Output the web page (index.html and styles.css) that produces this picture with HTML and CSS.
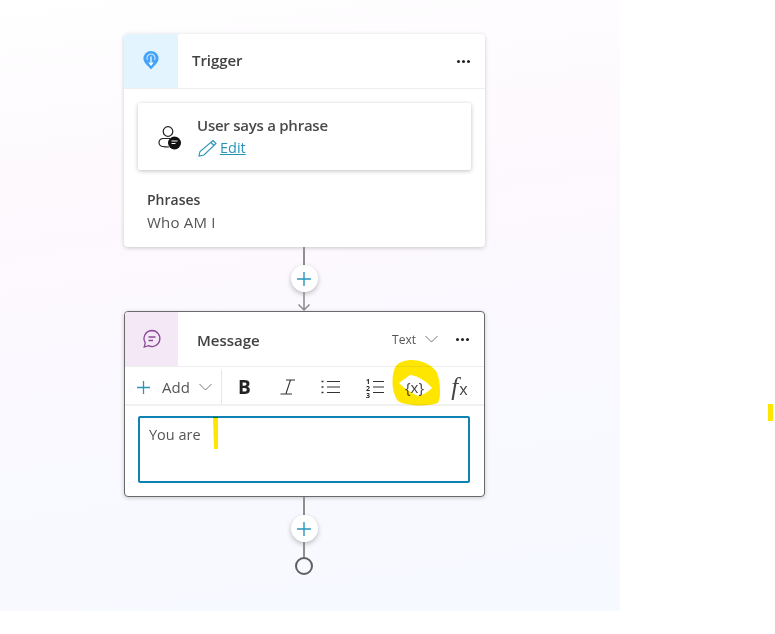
FILE: index.html
```html
<!DOCTYPE html>
<html lang="en">
<head>
  <meta charset="UTF-8">
  <title>Topic editor</title>
  <link rel="stylesheet" href="styles.css">
</head>
<body>
  <div class="canvas">
    <div class="flow">
      <!-- trigger node -->
      <div class="card">
        <div class="card-head">
          <div class="head-icon trigger-bg">
            <svg width="20" height="24" viewBox="0 0 20 24">
              <circle cx="10" cy="9.5" r="7.6" fill="#45a3fa"/>
              <path d="M5 15 L10 20.5 L15 15 Z" fill="#45a3fa"/>
              <path d="M6.5 11 A4 4 0 1 1 13.5 11" fill="none" stroke="#cfe8ff" stroke-width="1.1"/>
              <path d="M10 7.5 V16 M8 13.5 L10 16 L12 13.5" fill="none" stroke="#fff" stroke-width="1.2"/>
            </svg>
          </div>
          <span class="trigger-title">Trigger</span>
          <span class="dots"><i></i><i></i><i></i></span>
        </div>
        <div class="card-body">
          <div class="phrase-box">
            <svg class="person" width="26" height="26" viewBox="0 0 26 26">
              <circle cx="11" cy="6.5" r="4.8" fill="none" stroke="#222" stroke-width="1.2"/>
              <path d="M13 13.5 H6 a3.8 3.8 0 0 0 0 8 C7.5 22 10 22 12 22" fill="none" stroke="#222" stroke-width="1.2"/>
              <circle cx="17.5" cy="18" r="6.5" fill="#111"/>
              <path d="M14.5 16 H20.5 M14.5 18.5 H18.5" stroke="#fff" stroke-width="1.2"/>
            </svg>
            <div>
              <div class="phrase-title">User says a phrase</div>
              <div class="edit-row">
                <svg width="20" height="18" viewBox="0 0 20 18">
                  <path d="M16 1.5 L19 4.5 L7 16 L2 17 L3 12.5 Z M14 3.5 L17 6.5" fill="none" stroke="#2a94b8" stroke-width="1.1"/>
                </svg>
                <a href="#" class="edit-link">Edit</a>
              </div>
            </div>
          </div>
          <div class="phrases">
            <div class="phrases-label">Phrases</div>
            <div class="phrases-text">Who AM I</div>
          </div>
        </div>
      </div>

      <div class="connector">
        <div class="line line-top"></div>
        <div class="plus-btn">
          <svg width="16" height="16" viewBox="0 0 16 16"><path d="M8 1 V15 M1 8 H15" stroke="#2a94bd" stroke-width="1.4"/></svg>
        </div>
        <svg class="arrow" width="14" height="19" viewBox="0 0 14 19">
          <path d="M7 0 V18 M1.5 12.5 L7 18 L12.5 12.5" fill="none" stroke="#8f8f8f" stroke-width="1.6"/>
        </svg>
      </div>

      <!-- message node -->
      <div class="card card-active">
        <div class="card-head">
          <div class="head-icon message-bg">
            <svg width="22" height="22" viewBox="0 0 22 22">
              <path d="M11 2.5 a8 8 0 1 1 -3.6 15.2 L3.2 19 L4.3 14.8 A8 8 0 0 1 11 2.5 Z" fill="none" stroke="#8a4a95" stroke-width="1.3"/>
              <path d="M7.5 9 H14.5 M7.5 12.5 H12" stroke="#8a4a95" stroke-width="1.3"/>
            </svg>
          </div>
          <span class="message-title">Message</span>
          <span class="type-pick">Text
            <svg width="13" height="8" viewBox="0 0 13 8"><path d="M.5 1 L6.5 7 L12.5 1" fill="none" stroke="#777" stroke-width="1"/></svg>
          </span>
          <span class="dots"><i></i><i></i><i></i></span>
        </div>
        <div class="toolbar">
          <div class="add-btn">
            <svg width="13" height="13" viewBox="0 0 13 13"><path d="M6.5 0 V13 M0 6.5 H13" stroke="#2a94bd" stroke-width="1.3"/></svg>
            <span>Add</span>
            <svg width="13" height="8" viewBox="0 0 13 8"><path d="M.5 1 L6.5 7 L12.5 1" fill="none" stroke="#777" stroke-width="1"/></svg>
          </div>
          <div class="tool tool-b">B</div>
          <div class="tool">
            <svg width="18" height="16" viewBox="0 0 18 16"><path d="M7 1 H16 M11.5 1 L7 14.5 M1.5 15 H13" fill="none" stroke="#333" stroke-width="1.1"/></svg>
          </div>
          <div class="tool">
            <svg width="19" height="14" viewBox="0 0 19 14">
              <path d="M6 1.5 H19 M6 7 H19 M6 12.5 H19" stroke="#333" stroke-width="1.1"/>
              <path d="M.5 1.5 H2.5 M.5 7 H2.5 M.5 12.5 H2.5" stroke="#333" stroke-width="1.6"/>
            </svg>
          </div>
          <div class="tool">
            <div class="num-list">123</div>
            <svg width="11" height="14" viewBox="0 0 11 14">
              <path d="M0 1.5 H11 M0 7 H11 M0 12.5 H11" stroke="#333" stroke-width="1.1"/>
            </svg>
          </div>
          <div class="tool tool-x">{x}</div>
          <div class="tool tool-fx">f<span>x</span></div>
        </div>
        <div class="editor-wrap">
          <div class="editor">You are</div>
        </div>
      </div>

      <div class="connector">
        <div class="line line-low"></div>
        <div class="plus-btn">
          <svg width="16" height="16" viewBox="0 0 16 16"><path d="M8 1 V15 M1 8 H15" stroke="#2a94bd" stroke-width="1.4"/></svg>
        </div>
        <div class="line line-end"></div>
        <div class="end-dot"></div>
      </div>
    </div>
  </div>

  <!-- yellow marker scribbles on top of the screenshot -->
  <svg class="scribble" width="775" height="634" viewBox="0 0 775 634">
    <path fill-rule="evenodd" fill="#ffe600" d="M396 366 C404 357 425 358 436 371 C441 380 441 398 438 403 C428 407 405 406 398 401 C391 392 391 374 396 366 Z M399 383 L410 375 C419 376 427 382 432 388 C428 392 423 395 418 396 C411 393 404 388 399 383 Z"/>
    <path fill="#ffe600" d="M213 417 H218 L218 449 H214 Z"/>
    <rect x="768" y="404" width="5" height="17" fill="#ffe600"/>
  </svg>
</body>
</html>
```

FILE: styles.css
```css
body{
  margin:0;
  width:775px;
  height:634px;
  overflow:hidden;
  background:#fff;
  font-family:"Open Sans","Noto Sans",sans-serif;
  color:#424242;
  position:relative;
}
.canvas{
  width:620px;
  height:611px;
  padding:34px 0 0 124px;
  box-sizing:border-box;
  background:linear-gradient(172deg,#fff 0%,#fdf8fd 35%,#f9f9ff 65%,#f6f9ff 100%);
}
.flow{
  width:361px;
  filter:blur(.35px);
}
.card{
  background:#fff;
  border-radius:4px;
  box-shadow:0 1px 4px rgba(0,0,0,.2);
  overflow:hidden;
}
.card-active{
  border:1px solid #6a6a6a;
  box-sizing:border-box;
  height:186px;
}
.card-head{
  height:55px;
  display:flex;
  align-items:center;
  border-bottom:1px solid #eee;
  box-sizing:border-box;
}
.head-icon{
  width:54px;
  height:100%;
  display:flex;
  align-items:center;
  justify-content:center;
}
.card-active .head-icon{width:53px;}
.trigger-bg{background:#e4f4ff;}
.message-bg{background:#f4e8f6;}
.trigger-title{
  margin:-2px 0 0 14px;
  font-size:15px;
  font-weight:600;
  letter-spacing:-.05px;
}
.message-title{
  margin-left:19px;
  margin-top:2px;
  font-size:15px;
  font-weight:600;
}
.dots{
  margin-left:auto;
  margin-right:15px;
  display:flex;
  gap:2px;
}
.dots i{
  width:3px;
  height:3px;
  border-radius:50%;
  background:#222;
}
.type-pick{
  margin-left:auto;
  display:flex;
  align-items:center;
  gap:9px;
  font-size:12px;
  color:#555;
}
.type-pick + .dots{
  margin-left:18px;
}
.card-body{
  padding:14px 14px 0;
  height:158px;
  box-sizing:border-box;
}
.phrase-box{
  height:67px;
  box-sizing:border-box;
  display:flex;
  align-items:center;
  gap:14px;
  padding:0 0 0 19px;
  border-radius:2px;
  box-shadow:0 1px 4px rgba(0,0,0,.25);
}
.person{margin-top:2px;}
.phrase-title{
  font-size:15px;
  font-weight:600;
  letter-spacing:-.25px;
  line-height:20px;
  color:#4a4a4a;
}
.edit-row{
  display:flex;
  align-items:center;
  gap:3px;
  height:22px;
  margin-top:2px;
}
.edit-link{
  font-size:14.5px;
  color:#2a94b8;
}
.phrases{
  padding:19px 0 0 9px;
  font-size:14px;
  line-height:22px;
}
.phrases-label{
  font-weight:600;
}
.phrases-text{
  color:#555;
  font-size:15px;
  letter-spacing:.2px;
}
.connector{
  display:flex;
  flex-direction:column;
  align-items:center;
  padding-right:1px;
}
.line{
  width:2px;
  background:#8f8f8f;
}
.line-top{height:18px;}
.line-low{height:18px;}
.line-end{height:15px;}
.arrow{display:block;}
.plus-btn{
  width:27px;
  height:27px;
  border-radius:50%;
  background:#fff;
  box-shadow:0 2px 5px rgba(0,0,0,.25);
  display:flex;
  align-items:center;
  justify-content:center;
}
.end-dot{
  width:18px;
  height:18px;
  box-sizing:border-box;
  border:2.5px solid #5f5f5f;
  border-radius:50%;
}
.toolbar{
  height:39px;
  display:flex;
  align-items:center;
  padding-top:3px;
  border-bottom:2px solid #f1f1f1;
  box-sizing:border-box;
}
.add-btn{
  width:97px;
  margin-right:1px;
  height:100%;
  box-sizing:border-box;
  display:flex;
  align-items:center;
  padding-left:12px;
  border-right:1px solid #e6e6e6;
  font-size:15px;
  color:#555;
}
.add-btn span{margin:0 9px 0 12px;}
.tool{
  width:43px;
  display:flex;
  align-items:center;
  justify-content:center;
}
.tool-b{
  font-size:19px;
  font-weight:700;
  color:#222;
}
.tool-x{
  font-size:15px;
  color:#444;
  margin-left:-2px;
  margin-right:2px;
}
.tool-fx{
  font-family:"Liberation Serif",serif;
  font-style:italic;
  font-size:25px;
  line-height:24px;
  color:#444;
}
.tool-fx span{
  font-family:"Open Sans",sans-serif;
  font-style:normal;
  font-size:16px;
  margin:4px 0 0 1px;
}
/* digits stacked as one vertical run */
.num-list{
  writing-mode:vertical-rl;
  text-orientation:upright;
  font-size:7px;
  font-weight:700;
  line-height:8px;
  letter-spacing:-2px;
  color:#222;
  margin-right:1px;
}
.editor-wrap{
  padding:10px 14px 0 13px;
}
.editor{
  height:67px;
  box-sizing:border-box;
  border:2px solid #0f82b4;
  border-radius:2px;
  padding:7px 9px;
  font-size:14.5px;
  color:#555;
}
/* marker ink lets the text under it show through */
.scribble{
  position:absolute;
  left:0;
  top:0;
  mix-blend-mode:multiply;
}
```
